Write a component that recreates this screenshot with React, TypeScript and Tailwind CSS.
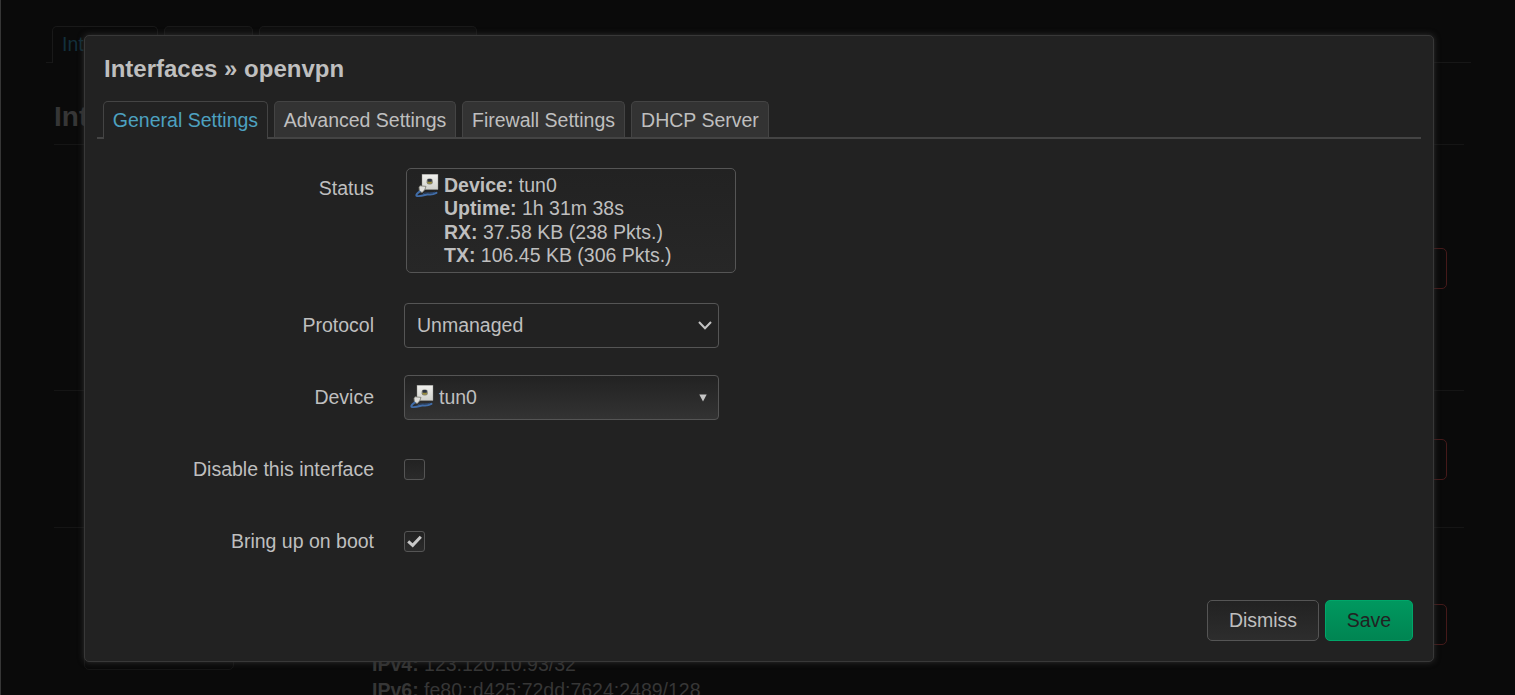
import type { ReactNode } from "react";

function TunnelIcon() {
  return (
    <svg width="24" height="24" viewBox="0 0 24 24" className="shrink-0">
      <defs>
        <linearGradient id="plate" x1="0" y1="0" x2="0" y2="1">
          <stop offset="0" stopColor="#f1f1ee" />
          <stop offset="1" stopColor="#d0d1cc" />
        </linearGradient>
      </defs>
      <rect x="7" y="0.2" width="16" height="15.4" fill="url(#plate)" stroke="#8d8d88" strokeWidth="0.4" />
      <rect x="11.6" y="4.6" width="6.2" height="6" rx="2.4" fill="#85857a" />
      <rect x="12.6" y="5.1" width="4.2" height="2.8" rx="1" fill="#2b3242" />
      <rect x="12.6" y="7.8" width="4.2" height="1.8" rx="0.5" fill="#9b8e3a" />
      <path d="M4 13.2 5 11.8 11 12.4 9.8 15.8 7.2 18.4 4.4 17.4Z" fill="#dededb" stroke="#77776f" strokeWidth="0.8" />
      <path
        d="M4.6 17.6C2.4 19 0.8 20.8 1.6 21.8C4.2 23 9.6 21 12.6 20.2C15.6 20.8 18.6 20.4 21.4 18.8"
        fill="none"
        stroke="#416da8"
        strokeWidth="2"
        strokeLinecap="round"
      />
      <path d="M8 19.6C11 18.4 14 19.6 20 18.2" fill="none" stroke="#2c4a75" strokeWidth="1" />
    </svg>
  );
}

function Stat({ name, value }: { name: string; value: string }) {
  return (
    <div>
      <strong>{name}:</strong> {value}
    </div>
  );
}

type FieldProps = { label: string; className: string; labelClassName?: string; children: ReactNode };

function Field({ label, className, labelClassName = "pt-[9px]", children }: FieldProps) {
  return (
    <div className={`flex gap-[30px] ${className}`}>
      <div className={`w-[289px] shrink-0 text-right leading-[27px] ${labelClassName}`}>{label}</div>
      {children}
    </div>
  );
}

const tabs = [
  { label: "Advanced Settings", width: "w-[182px]" },
  { label: "Firewall Settings", width: "w-[163px]" },
  { label: "DHCP Server", width: "w-[138px]" },
];

const rows = [
  { id: "first", size: "h-[246px] pt-[103px]" },
  { id: "second", size: "h-[137px] pt-[48px]" },
];

const redButton = "mr-[17px] h-[41px] w-[100px] shrink-0 rounded-[5px] border border-[#451a1a]";

function Page() {
  return (
    <div className="h-full overflow-hidden border-l border-[#363636]">
      <div className="mr-11 ml-[45px] flex h-[63px] items-end gap-1.5 border-b border-[#171717] pl-1.5">
        <div className="-mb-px h-[37px] w-[106px] rounded-t-[5px] border border-b-0 border-[#191919] bg-[#0a0a0a] pt-1 pl-[9px] leading-[27px] text-[#13303c]">
          Interfaces
        </div>
        <div className="h-[36px] w-[89px] rounded-t-[5px] border border-b-0 border-[#191919] bg-[#0f0f0f]" />
        <div className="h-[36px] w-[218px] rounded-t-[5px] border border-b-0 border-[#191919] bg-[#0f0f0f]" />
      </div>
      <div className="mr-[51px] ml-[53px]">
        <h2 className="h-[81px] pt-[36px] text-[28px] leading-[35px] font-bold text-[#363636]">Interfaces</h2>
        {rows.map((row) => (
          <div key={row.id} className={`flex justify-end border-t border-[#151515] ${row.size}`}>
            <div className={redButton} />
          </div>
        ))}
        <div className="flex justify-between border-t border-[#151515] pt-[76px]">
          <div className="ml-[30px] h-[66px] w-[150px] rounded-[5px] border border-[#161616]" />
          <div className="mt-[47px] ml-[138px] flex-1 leading-[26px] text-[#363636]">
            <Stat name="IPv4" value="123.120.10.93/32" />
            <Stat name="IPv6" value="fe80::d425:72dd:7624:2489/128" />
          </div>
          <div className={redButton} />
        </div>
      </div>
    </div>
  );
}

export default function App() {
  return (
    <div className="relative h-[695px] overflow-hidden bg-[#0a0a0a] font-['Liberation_Sans',Arial,sans-serif] text-[19.5px] text-[#bfbfbf]">
      <Page />

      <div
        role="dialog"
        className="absolute top-[35px] left-[84px] flex h-[627px] w-[1350px] flex-col rounded-[5px] border border-[#383838] bg-[#222] shadow-[0_0_6px_#303030]"
      >
        <h4 className="h-[65px] pt-[18px] pl-[19px] text-[24px] leading-[29px] font-bold">Interfaces » openvpn</h4>
        <div className="mx-3 flex gap-1.5 border-b-2 border-[#444] pl-1.5">
          <div className="-mb-0.5 h-[38px] w-[165px] rounded-t-[5px] border border-b-0 border-[#444] bg-[#222] pt-[5px] text-center leading-[27px] text-[#4da1c0]">
            General Settings
          </div>
          {tabs.map((tab) => (
            <div
              key={tab.label}
              className={`h-[36px] rounded-t-[5px] border border-b-0 border-[#444] bg-[#333] pt-[5px] text-center leading-[27px] ${tab.width}`}
            >
              {tab.label}
            </div>
          ))}
        </div>

        <Field label="Status" className="mt-[29px] h-[135px]" labelClassName="pt-[7px]">
          <div className="ml-0.5 flex h-[105px] w-[330px] gap-[5px] rounded-[5px] border border-[#555] bg-linear-to-b from-[#222] to-[#272727] pt-[5px] pl-2 leading-[23.4px]">
            <TunnelIcon />
            <div>
              <Stat name="Device" value="tun0" />
              <Stat name="Uptime" value="1h 31m 38s" />
              <Stat name="RX" value="37.58 KB (238 Pkts.)" />
              <Stat name="TX" value="106.45 KB (306 Pkts.)" />
            </div>
          </div>
        </Field>
        <Field label="Protocol" className="h-[72px]">
          <div className="flex h-[45px] w-[315px] items-center justify-between rounded-[4px] border border-[#555] pr-[6px] pl-3">
            <span>Unmanaged</span>
            <svg width="14" height="10" viewBox="0 0 14 10" fill="none" stroke="#c4c4c4" strokeWidth="2">
              <path d="M1 1 7 7.3 13 1" />
            </svg>
          </div>
        </Field>
        <Field label="Device" className="h-[72px]">
          <div className="flex h-[45px] w-[315px] items-center rounded-[4px] border border-[#555] bg-linear-to-b from-[#222] to-[#333] pr-[11px] pl-[5px]">
            <div className="pb-px">
              <TunnelIcon />
            </div>
            <span className="ml-[5px] flex-1">tun0</span>
            <svg width="8" height="8" viewBox="0 0 8 8" fill="#c4c4c4">
              <path d="M0.3 0.5H7.7L4 7.5Z" />
            </svg>
          </div>
        </Field>
        <Field label="Disable this interface" className="h-[72px]">
          <div className="mt-3 size-[21px] rounded-[3px] border border-[#555] bg-linear-to-b from-[#222] to-[#2b2b2b]" />
        </Field>
        <Field label="Bring up on boot" className="flex-1">
          <div className="mt-3 size-[21px] rounded-[3px] border border-[#555] bg-linear-to-b from-[#222] to-[#2b2b2b]">
            <svg width="19" height="19" viewBox="0 0 19 19" fill="none" stroke="#c8c8c8" strokeWidth="3">
              <path d="M3.2 9.4 7.7 13.4 15.8 4.8" />
            </svg>
          </div>
        </Field>

        <div className="mb-5 flex justify-end gap-1.5 pr-5">
          <button className="h-[41px] w-[112px] rounded-[5px] border border-[#555] bg-linear-to-b from-[#222] to-[#2d2d2d]">
            Dismiss
          </button>
          <button className="h-[41px] w-[88px] rounded-[5px] border border-[#00a669] bg-linear-to-b from-[#00985f] to-[#008552] text-[#222]">
            Save
          </button>
        </div>
      </div>
    </div>
  );
}
